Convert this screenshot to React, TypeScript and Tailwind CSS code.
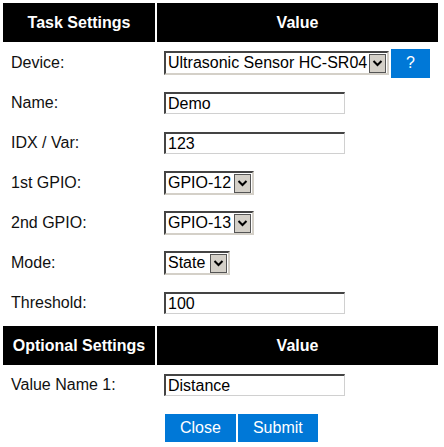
import React from 'react';

const Header: React.FC<{ left: string }> = ({ left }) => (
  <div className="grid grid-cols-[152px_281px] gap-x-[2px] h-[39px]">
    <div className="bg-black text-white font-bold flex items-center justify-center">{left}</div>
    <div className="bg-black text-white font-bold flex items-center justify-center">Value</div>
  </div>
);

const Row: React.FC<{ label: string; children: React.ReactNode }> = ({ label, children }) => (
  <div className="grid grid-cols-[152px_281px] gap-x-[2px] h-[40px] items-center">
    <div className="pl-[8px] text-[#111]">{label}</div>
    <div className="pl-[7px] flex items-center gap-[2px]">{children}</div>
  </div>
);

const TextInput: React.FC<{ value: string }> = ({ value }) => (
  <div className="w-[181px] h-[22px] bg-white border-t-2 border-l-2 border-t-[#444] border-l-[#444] border-b border-r border-b-[#d0d0d0] border-r-[#d0d0d0] pl-[2px] flex items-center leading-none text-black">
    {value}
  </div>
);

const Select: React.FC<{ value: string; width: string }> = ({ value, width }) => (
  <div
    className={`${width} h-[24px] bg-white border-t-2 border-l-2 border-t-[#444] border-l-[#444] border-b-2 border-r-2 border-b-[#d4d0c8] border-r-[#d4d0c8] flex items-center justify-between leading-none text-black`}
  >
    <span className="pl-[2px] whitespace-nowrap">{value}</span>
    <span className="w-[17px] h-[19px] mr-[1px] bg-[#d4d0c8] border border-[#555] flex items-center justify-center">
      <svg width="11" height="8" viewBox="0 0 11 8">
        <path d="M1.5 2 L5.5 6 L9.5 2" fill="none" stroke="#000" strokeWidth="2" />
      </svg>
    </span>
  </div>
);

const BlueButton: React.FC<{ children: React.ReactNode; className?: string }> = ({ children, className }) => (
  <div className={`bg-[#0078d7] text-white flex items-center justify-center leading-none ${className ?? ''}`}>{children}</div>
);

export default function App() {
  return (
    <div className="w-[444px] h-[447px] bg-white overflow-hidden text-[16px] pt-[3px] pl-[3px]" style={{ fontFamily: '"Liberation Sans", Arial, sans-serif' }}>
      <Header left="Task Settings" />
      <div className="h-px" />
      <Row label="Device:">
        <Select value="Ultrasonic Sensor HC-SR04" width="w-[225px]" />
        <BlueButton className="w-[39px] h-[29px]">?</BlueButton>
      </Row>
      <Row label="Name:">
        <TextInput value="Demo" />
      </Row>
      <Row label="IDX / Var:">
        <TextInput value="123" />
      </Row>
      <Row label="1st GPIO:">
        <Select value="GPIO-12" width="w-[90px]" />
      </Row>
      <Row label="2nd GPIO:">
        <Select value="GPIO-13" width="w-[90px]" />
      </Row>
      <Row label="Mode:">
        <Select value="State" width="w-[66px]" />
      </Row>
      <Row label="Threshold:">
        <TextInput value="100" />
      </Row>
      <div className="h-[3px]" />
      <Header left="Optional Settings" />
      <Row label="Value Name 1:">
        <TextInput value="Distance" />
      </Row>
      <div className="grid grid-cols-[152px_281px] gap-x-[2px] mt-[9px]">
        <div />
        <div className="pl-[8px] flex gap-[2px]">
          <BlueButton className="h-[28px] px-[15px]">Close</BlueButton>
          <BlueButton className="h-[28px] px-[15px]">Submit</BlueButton>
        </div>
      </div>
    </div>
  );
}
